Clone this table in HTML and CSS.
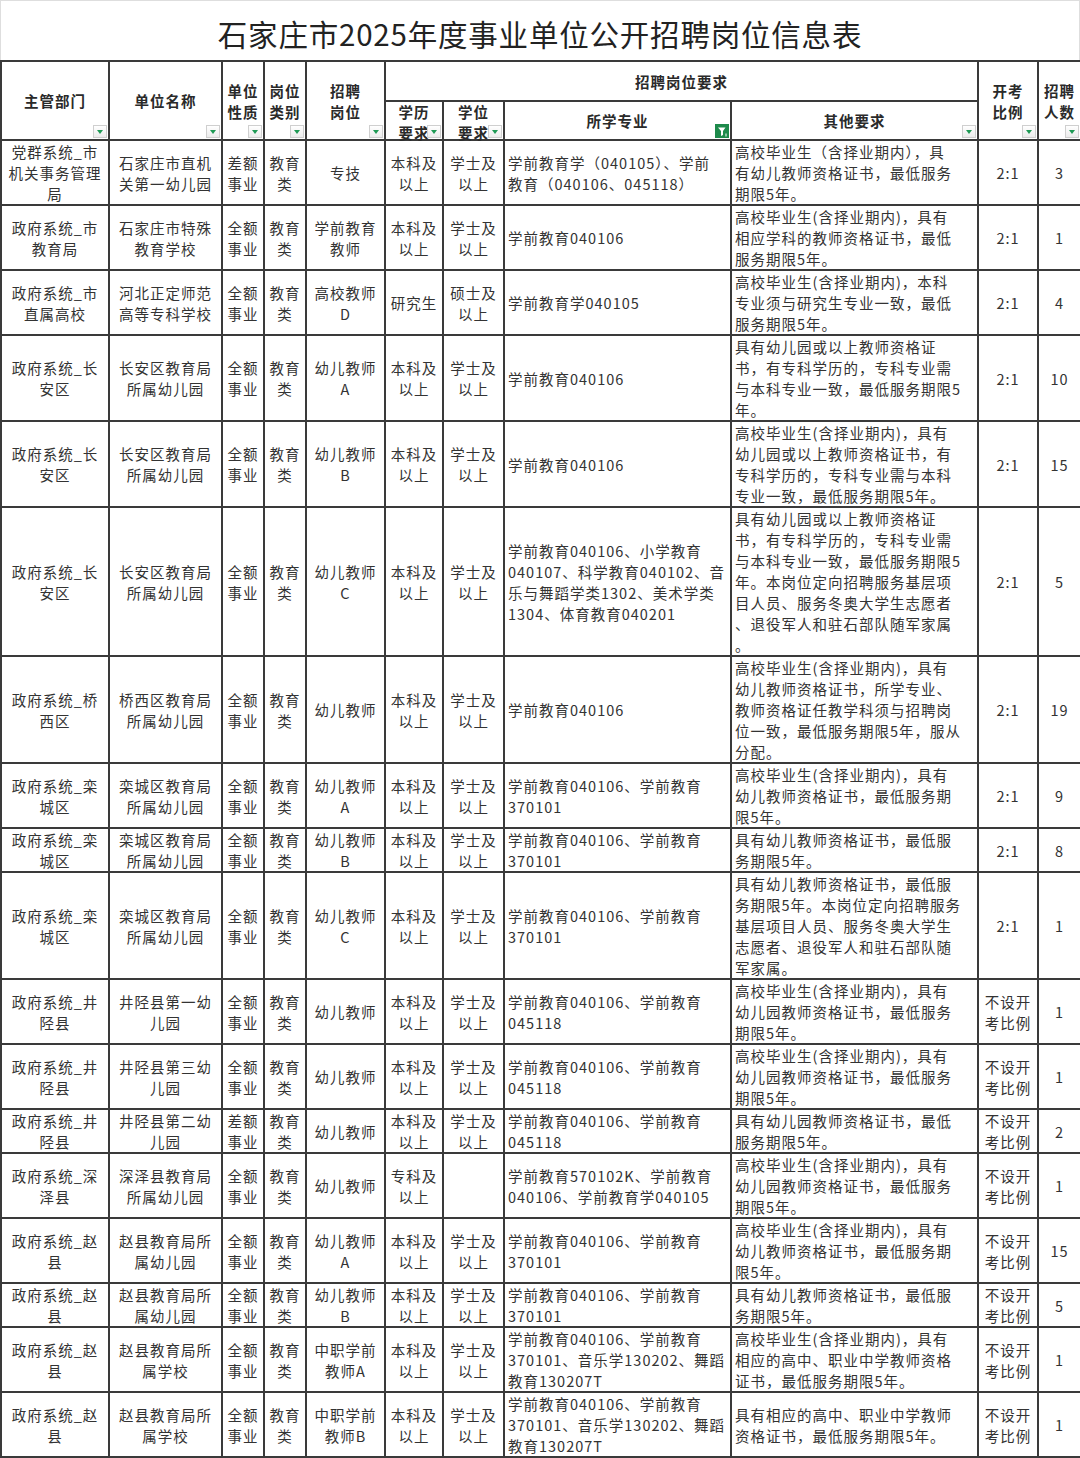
FILE: index.html
```html
<!DOCTYPE html>
<html lang="zh-CN">
<head>
<meta charset="utf-8">
<title>石家庄市2025年度事业单位公开招聘岗位信息表</title>
<link rel="stylesheet" href="styles.css">
</head>
<body>
<div class="sheet">
  <div class="title">石家庄市2025年度事业单位公开招聘岗位信息表</div>
  <table class="grid">
    <colgroup>
      <col class="w1"><col class="w2"><col class="w3"><col class="w4"><col class="w5"><col class="w6"><col class="w7"><col class="w8"><col class="w9"><col class="w10"><col class="w11">
    </colgroup>
    <thead>
      <tr class="h1">
        <th rowspan="2">主管部门<span class="filt"></span></th>
        <th rowspan="2">单位名称<span class="filt"></span></th>
        <th rowspan="2">单位<br>性质<span class="filt"></span></th>
        <th rowspan="2">岗位<br>类别<span class="filt"></span></th>
        <th rowspan="2">招聘<br>岗位<span class="filt"></span></th>
        <th colspan="4">招聘岗位要求</th>
        <th rowspan="2">开考<br>比例<span class="filt"></span></th>
        <th rowspan="2">招聘<br>人数<span class="filt"></span></th>
      </tr>
      <tr class="h2">
        <th class="tight"><div class="two">学历<br>要求</div><span class="filt"></span></th>
        <th class="tight"><div class="two">学位<br>要求</div><span class="filt"></span></th>
        <th>所学专业<span class="filt on"><svg viewBox="0 0 14 14" width="14" height="14"><rect width="14" height="14" fill="#1e8a4b"/><path d="M3 3.5h7.5L8 7v4L6 12V7z" fill="#fff"/><path d="M11 9.5v3" stroke="#fff" stroke-width="1"/></svg></span></th>
        <th>其他要求<span class="filt"></span></th>
      </tr>
    </thead>
    <tbody>
      <tr>
        <td>党群系统_市<br>机关事务管理<br>局</td>
        <td>石家庄市直机<br>关第一幼儿园</td>
        <td>差额<br>事业</td>
        <td>教育<br>类</td>
        <td>专技</td>
        <td>本科及<br>以上</td>
        <td>学士及<br>以上</td>
        <td class="l">学前教育学（040105）、学前<br>教育（040106、045118）</td>
        <td class="l">高校毕业生（含择业期内），具<br>有幼儿教师资格证书，最低服务<br>期限5年。</td>
        <td>2:1</td>
        <td>3</td>
      </tr>
      <tr>
        <td>政府系统_市<br>教育局</td>
        <td>石家庄市特殊<br>教育学校</td>
        <td>全额<br>事业</td>
        <td>教育<br>类</td>
        <td>学前教育<br>教师</td>
        <td>本科及<br>以上</td>
        <td>学士及<br>以上</td>
        <td class="l">学前教育040106</td>
        <td class="l">高校毕业生(含择业期内)，具有<br>相应学科的教师资格证书，最低<br>服务期限5年。</td>
        <td>2:1</td>
        <td>1</td>
      </tr>
      <tr>
        <td>政府系统_市<br>直属高校</td>
        <td>河北正定师范<br>高等专科学校</td>
        <td>全额<br>事业</td>
        <td>教育<br>类</td>
        <td>高校教师<br>D</td>
        <td>研究生</td>
        <td>硕士及<br>以上</td>
        <td class="l">学前教育学040105</td>
        <td class="l">高校毕业生(含择业期内)，本科<br>专业须与研究生专业一致，最低<br>服务期限5年。</td>
        <td>2:1</td>
        <td>4</td>
      </tr>
      <tr>
        <td>政府系统_长<br>安区</td>
        <td>长安区教育局<br>所属幼儿园</td>
        <td>全额<br>事业</td>
        <td>教育<br>类</td>
        <td>幼儿教师<br>A</td>
        <td>本科及<br>以上</td>
        <td>学士及<br>以上</td>
        <td class="l">学前教育040106</td>
        <td class="l">具有幼儿园或以上教师资格证<br>书，有专科学历的，专科专业需<br>与本科专业一致，最低服务期限5<br>年。</td>
        <td>2:1</td>
        <td>10</td>
      </tr>
      <tr>
        <td>政府系统_长<br>安区</td>
        <td>长安区教育局<br>所属幼儿园</td>
        <td>全额<br>事业</td>
        <td>教育<br>类</td>
        <td>幼儿教师<br>B</td>
        <td>本科及<br>以上</td>
        <td>学士及<br>以上</td>
        <td class="l">学前教育040106</td>
        <td class="l">高校毕业生(含择业期内)，具有<br>幼儿园或以上教师资格证书，有<br>专科学历的，专科专业需与本科<br>专业一致，最低服务期限5年。</td>
        <td>2:1</td>
        <td>15</td>
      </tr>
      <tr>
        <td>政府系统_长<br>安区</td>
        <td>长安区教育局<br>所属幼儿园</td>
        <td>全额<br>事业</td>
        <td>教育<br>类</td>
        <td>幼儿教师<br>C</td>
        <td>本科及<br>以上</td>
        <td>学士及<br>以上</td>
        <td class="l">学前教育040106、小学教育<br>040107、科学教育040102、音<br>乐与舞蹈学类1302、美术学类<br>1304、体育教育040201</td>
        <td class="l">具有幼儿园或以上教师资格证<br>书，有专科学历的，专科专业需<br>与本科专业一致，最低服务期限5<br>年。本岗位定向招聘服务基层项<br>目人员、服务冬奥大学生志愿者<br>、退役军人和驻石部队随军家属<br>。</td>
        <td>2:1</td>
        <td>5</td>
      </tr>
      <tr>
        <td>政府系统_桥<br>西区</td>
        <td>桥西区教育局<br>所属幼儿园</td>
        <td>全额<br>事业</td>
        <td>教育<br>类</td>
        <td>幼儿教师</td>
        <td>本科及<br>以上</td>
        <td>学士及<br>以上</td>
        <td class="l">学前教育040106</td>
        <td class="l">高校毕业生(含择业期内)，具有<br>幼儿教师资格证书，所学专业、<br>教师资格证任教学科须与招聘岗<br>位一致，最低服务期限5年，服从<br>分配。</td>
        <td>2:1</td>
        <td>19</td>
      </tr>
      <tr>
        <td>政府系统_栾<br>城区</td>
        <td>栾城区教育局<br>所属幼儿园</td>
        <td>全额<br>事业</td>
        <td>教育<br>类</td>
        <td>幼儿教师<br>A</td>
        <td>本科及<br>以上</td>
        <td>学士及<br>以上</td>
        <td class="l">学前教育040106、学前教育<br>370101</td>
        <td class="l">高校毕业生(含择业期内)，具有<br>幼儿教师资格证书，最低服务期<br>限5年。</td>
        <td>2:1</td>
        <td>9</td>
      </tr>
      <tr>
        <td>政府系统_栾<br>城区</td>
        <td>栾城区教育局<br>所属幼儿园</td>
        <td>全额<br>事业</td>
        <td>教育<br>类</td>
        <td>幼儿教师<br>B</td>
        <td>本科及<br>以上</td>
        <td>学士及<br>以上</td>
        <td class="l">学前教育040106、学前教育<br>370101</td>
        <td class="l">具有幼儿教师资格证书，最低服<br>务期限5年。</td>
        <td>2:1</td>
        <td>8</td>
      </tr>
      <tr>
        <td>政府系统_栾<br>城区</td>
        <td>栾城区教育局<br>所属幼儿园</td>
        <td>全额<br>事业</td>
        <td>教育<br>类</td>
        <td>幼儿教师<br>C</td>
        <td>本科及<br>以上</td>
        <td>学士及<br>以上</td>
        <td class="l">学前教育040106、学前教育<br>370101</td>
        <td class="l">具有幼儿教师资格证书，最低服<br>务期限5年。本岗位定向招聘服务<br>基层项目人员、服务冬奥大学生<br>志愿者、退役军人和驻石部队随<br>军家属。</td>
        <td>2:1</td>
        <td>1</td>
      </tr>
      <tr>
        <td>政府系统_井<br>陉县</td>
        <td>井陉县第一幼<br>儿园</td>
        <td>全额<br>事业</td>
        <td>教育<br>类</td>
        <td>幼儿教师</td>
        <td>本科及<br>以上</td>
        <td>学士及<br>以上</td>
        <td class="l">学前教育040106、学前教育<br>045118</td>
        <td class="l">高校毕业生(含择业期内)，具有<br>幼儿园教师资格证书，最低服务<br>期限5年。</td>
        <td>不设开<br>考比例</td>
        <td>1</td>
      </tr>
      <tr>
        <td>政府系统_井<br>陉县</td>
        <td>井陉县第三幼<br>儿园</td>
        <td>全额<br>事业</td>
        <td>教育<br>类</td>
        <td>幼儿教师</td>
        <td>本科及<br>以上</td>
        <td>学士及<br>以上</td>
        <td class="l">学前教育040106、学前教育<br>045118</td>
        <td class="l">高校毕业生(含择业期内)，具有<br>幼儿园教师资格证书，最低服务<br>期限5年。</td>
        <td>不设开<br>考比例</td>
        <td>1</td>
      </tr>
      <tr>
        <td>政府系统_井<br>陉县</td>
        <td>井陉县第二幼<br>儿园</td>
        <td>差额<br>事业</td>
        <td>教育<br>类</td>
        <td>幼儿教师</td>
        <td>本科及<br>以上</td>
        <td>学士及<br>以上</td>
        <td class="l">学前教育040106、学前教育<br>045118</td>
        <td class="l">具有幼儿园教师资格证书，最低<br>服务期限5年。</td>
        <td>不设开<br>考比例</td>
        <td>2</td>
      </tr>
      <tr>
        <td>政府系统_深<br>泽县</td>
        <td>深泽县教育局<br>所属幼儿园</td>
        <td>全额<br>事业</td>
        <td>教育<br>类</td>
        <td>幼儿教师</td>
        <td>专科及<br>以上</td>
        <td></td>
        <td class="l">学前教育570102K、学前教育<br>040106、学前教育学040105</td>
        <td class="l">高校毕业生(含择业期内)，具有<br>幼儿园教师资格证书，最低服务<br>期限5年。</td>
        <td>不设开<br>考比例</td>
        <td>1</td>
      </tr>
      <tr>
        <td>政府系统_赵<br>县</td>
        <td>赵县教育局所<br>属幼儿园</td>
        <td>全额<br>事业</td>
        <td>教育<br>类</td>
        <td>幼儿教师<br>A</td>
        <td>本科及<br>以上</td>
        <td>学士及<br>以上</td>
        <td class="l">学前教育040106、学前教育<br>370101</td>
        <td class="l">高校毕业生(含择业期内)，具有<br>幼儿教师资格证书，最低服务期<br>限5年。</td>
        <td>不设开<br>考比例</td>
        <td>15</td>
      </tr>
      <tr>
        <td>政府系统_赵<br>县</td>
        <td>赵县教育局所<br>属幼儿园</td>
        <td>全额<br>事业</td>
        <td>教育<br>类</td>
        <td>幼儿教师<br>B</td>
        <td>本科及<br>以上</td>
        <td>学士及<br>以上</td>
        <td class="l">学前教育040106、学前教育<br>370101</td>
        <td class="l">具有幼儿教师资格证书，最低服<br>务期限5年。</td>
        <td>不设开<br>考比例</td>
        <td>5</td>
      </tr>
      <tr>
        <td>政府系统_赵<br>县</td>
        <td>赵县教育局所<br>属学校</td>
        <td>全额<br>事业</td>
        <td>教育<br>类</td>
        <td>中职学前<br>教师A</td>
        <td>本科及<br>以上</td>
        <td>学士及<br>以上</td>
        <td class="l">学前教育040106、学前教育<br>370101、音乐学130202、舞蹈<br>教育130207T</td>
        <td class="l">高校毕业生(含择业期内)，具有<br>相应的高中、职业中学教师资格<br>证书，最低服务期限5年。</td>
        <td>不设开<br>考比例</td>
        <td>1</td>
      </tr>
      <tr>
        <td>政府系统_赵<br>县</td>
        <td>赵县教育局所<br>属学校</td>
        <td>全额<br>事业</td>
        <td>教育<br>类</td>
        <td>中职学前<br>教师B</td>
        <td>本科及<br>以上</td>
        <td>学士及<br>以上</td>
        <td class="l">学前教育040106、学前教育<br>370101、音乐学130202、舞蹈<br>教育130207T</td>
        <td class="l">具有相应的高中、职业中学教师<br>资格证书，最低服务期限5年。</td>
        <td>不设开<br>考比例</td>
        <td>1</td>
      </tr>
    </tbody>
  </table>
</div>
</body>
</html>
```

FILE: styles.css
```css
html, body {
  margin: 0;
  padding: 0;
  background: #fff;
}

.sheet {
  width: 1080px;
  font-family: "Noto Sans CJK SC", "Noto Sans", sans-serif;
  color: #333;
}

.title {
  box-sizing: border-box;
  height: 60px;
  border: 1px solid #dedede;
  border-bottom: none;
  text-align: center;
  font-size: 29.5px;
  line-height: 42px;
  padding-top: 11px;
  color: #222;
  letter-spacing: 0.8px;
}

.grid {
  width: 1080px;
  table-layout: fixed;
  border-collapse: collapse;
  font-size: 14.5px;
  line-height: 21px;
  letter-spacing: 1px;
}

.w1 { width: 108px; }
.w2 { width: 113px; }
.w3 { width: 42px; }
.w4 { width: 42px; }
.w5 { width: 79px; }
.w6 { width: 58px; }
.w7 { width: 61px; }
.w8 { width: 227px; }
.w9 { width: 247px; }
.w10 { width: 60px; }
.w11 { width: 43px; }

.grid th,
.grid td {
  border: 2px solid #3a3a3a;
  padding: 0;
  text-align: center;
  vertical-align: middle;
  white-space: nowrap;
  overflow: hidden;
}

.grid th {
  position: relative;
  font-weight: 700;
  color: #2a2a2a;
}

.h1 { height: 40px; }
.h2 { height: 39px; }

.grid th.tight {
  vertical-align: top;
  overflow: visible;
}

.two {
  height: 38px;
  margin-top: -1px;
}

.grid td.l {
  text-align: left;
  padding-left: 3px;
}

.filt {
  position: absolute;
  right: 1px;
  bottom: 1px;
  box-sizing: border-box;
  width: 14px;
  height: 13px;
  border: 1px solid #cfcfcf;
  background: linear-gradient(#ffffff, #ececec);
  display: flex;
  align-items: center;
  justify-content: center;
}

.filt::after {
  content: "";
  width: 0;
  height: 0;
  border-left: 3.5px solid transparent;
  border-right: 3.5px solid transparent;
  border-top: 4px solid #1f9a55;
}

.filt.on {
  border: none;
  width: 14px;
  height: 14px;
  background: none;
}

.filt.on::after {
  display: none;
}

.filt.on svg {
  display: block;
}
```
